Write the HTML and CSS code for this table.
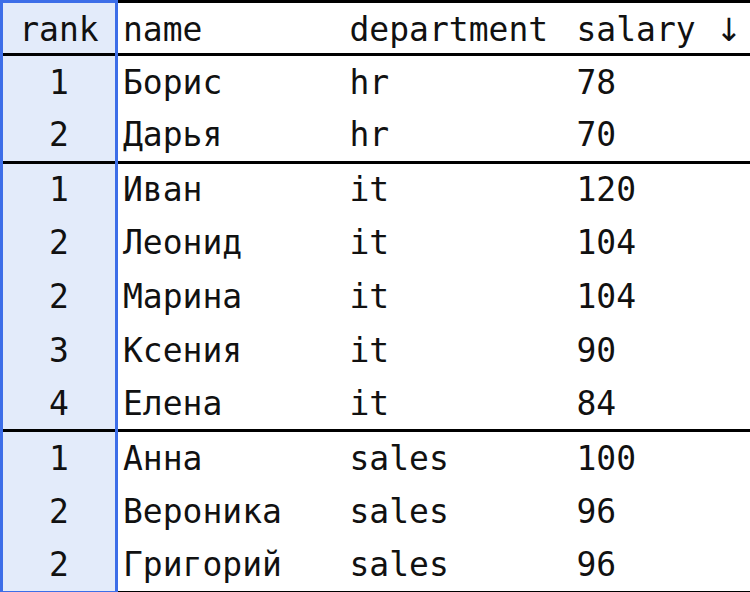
FILE: index.html
```html
<!DOCTYPE html>
<html>
<head>
<meta charset="utf-8">
<link rel="stylesheet" href="styles.css">
</head>
<body>
<table class="grid">
  <colgroup>
    <col class="c-rank"><col class="c-name"><col class="c-dept"><col class="c-sal">
  </colgroup>
  <thead>
    <tr><th class="rank">rank</th><th>name</th><th>department</th><th>salary <span class="arrow">↓</span></th></tr>
  </thead>
  <tbody>
    <tr><td class="rank">1</td><td>Борис</td><td>hr</td><td>78</td></tr>
    <tr class="last"><td class="rank">2</td><td>Дарья</td><td>hr</td><td>70</td></tr>
    <tr><td class="rank">1</td><td>Иван</td><td>it</td><td>120</td></tr>
    <tr><td class="rank">2</td><td>Леонид</td><td>it</td><td>104</td></tr>
    <tr><td class="rank">2</td><td>Марина</td><td>it</td><td>104</td></tr>
    <tr><td class="rank">3</td><td>Ксения</td><td>it</td><td>90</td></tr>
    <tr class="last"><td class="rank">4</td><td>Елена</td><td>it</td><td>84</td></tr>
    <tr><td class="rank">1</td><td>Анна</td><td>sales</td><td>100</td></tr>
    <tr><td class="rank">2</td><td>Вероника</td><td>sales</td><td>96</td></tr>
    <tr><td class="rank">2</td><td>Григорий</td><td>sales</td><td>96</td></tr>
  </tbody>
</table>
</body>
</html>
```
FILE: styles.css
```css
html, body {
  margin: 0;
  padding: 0;
  background: #fff;
}
.grid {
  width: 750px;
  border-collapse: collapse;
  border: 3px solid #000;
  font-family: "DejaVu Sans Mono", "Liberation Mono", monospace;
  font-size: 33px;
  color: #111;
  table-layout: fixed;
}
.c-rank { width: 115px; }
.c-name { width: 228px; }
.c-dept { width: 227px; }
.c-sal { width: 180px; }
th, td {
  padding: 0 0 0 5px;
  text-align: left;
  font-weight: normal;
  vertical-align: middle;
  white-space: nowrap;
}
thead th {
  padding-top: 2px;
}
thead tr {
  height: 53px;
  border-bottom: 3px solid #000;
}
tbody tr {
  height: 53.75px;
}
tbody tr.last {
  border-bottom: 3px solid #000;
}
.arrow {
  font-family: "DejaVu Sans", sans-serif;
  font-size: 32px;
}
.rank {
  text-align: center;
  padding: 0;
  background: #e3ebfa;
  border-left: 3px solid #3d6ee8;
  border-right: 3px solid #3d6ee8;
}
thead .rank {
  border-top: 3px solid #3d6ee8;
  padding-top: 2px;
}
tbody tr:last-child .rank {
  border-bottom: 3px solid #3d6ee8;
}
```
